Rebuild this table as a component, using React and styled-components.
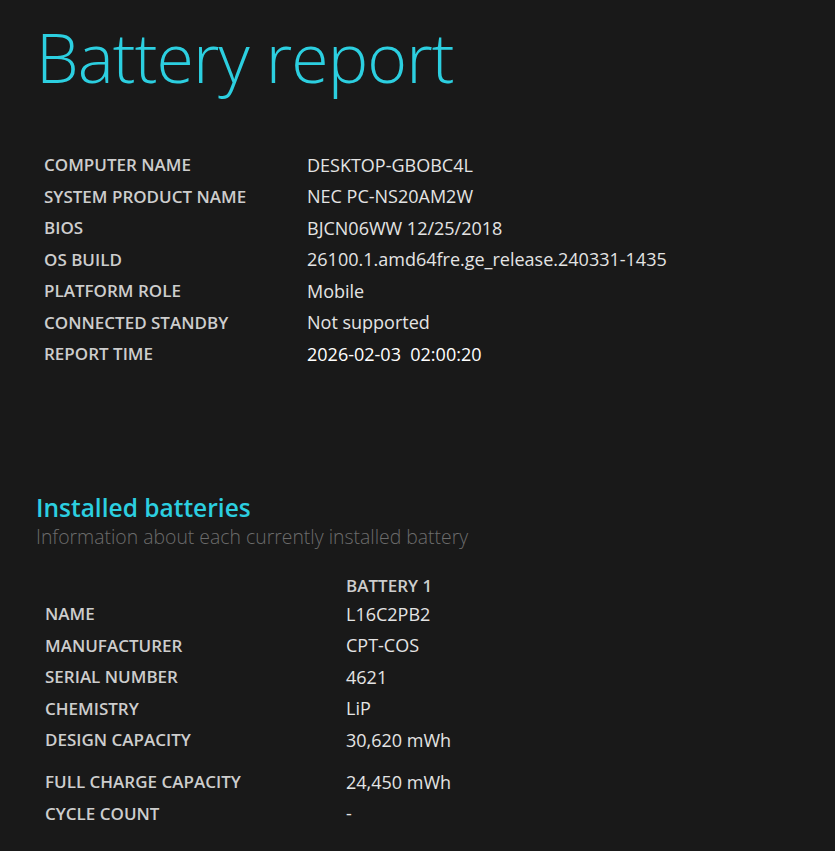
import React from "react";
import styled, { createGlobalStyle } from "styled-components";

const GlobalStyle = createGlobalStyle`
  html, body {
    margin: 0;
    background: #191919;
  }
  body {
    font-family: "Open Sans", "Noto Sans", sans-serif;
    color: #e6e6e6;
  }
`;

const systemInfo = [
  ["COMPUTER NAME", "DESKTOP-GBOBC4L"],
  ["SYSTEM PRODUCT NAME", "NEC PC-NS20AM2W"],
  ["BIOS", "BJCN06WW 12/25/2018"],
  ["OS BUILD", "26100.1.amd64fre.ge_release.240331-1435"],
  ["PLATFORM ROLE", "Mobile"],
  ["CONNECTED STANDBY", "Not supported"],
  ["REPORT TIME", "2026-02-03\u00a0\u00a002:00:20", true],
];

const battery = [
  ["NAME", "L16C2PB2"],
  ["MANUFACTURER", "CPT-COS"],
  ["SERIAL NUMBER", "4621"],
  ["CHEMISTRY", "LiP"],
  ["DESIGN CAPACITY", "30,620 mWh"],
  ["FULL CHARGE CAPACITY", "24,450 mWh", true],
  ["CYCLE COUNT", "-"],
];

function App() {
  return (
    <Page>
      <GlobalStyle />
      <Title>Battery report</Title>

      <Table $indent={8}>
        {systemInfo.map(([label, value, bright]) => (
          <Row key={label} $labelWidth={263}>
            <Label>{label}</Label>
            <Value $bright={bright}>{value}</Value>
          </Row>
        ))}
      </Table>

      <Section>
        <SectionTitle>Installed batteries</SectionTitle>
        <SectionNote>Information about each currently installed battery</SectionNote>

        <Table $indent={9}>
          <HeadRow $labelWidth={301}>
            <span />
            <Label>BATTERY 1</Label>
          </HeadRow>
          {battery.map(([label, value, spaced]) => (
            <Row key={label} $labelWidth={301} $spaced={spaced}>
              <Label>{label}</Label>
              <Value>{value}</Value>
            </Row>
          ))}
        </Table>
      </Section>
    </Page>
  );
}

export default App;

const Page = styled.div`
  padding: 17px 0 0 36px;
  min-height: 834px;
`;

const Title = styled.h1`
  margin: 0 0 52px 0;
  font-size: 68px;
  font-weight: 300;
  line-height: 80px;
  color: #2ccfe0;
  letter-spacing: -0.9px;
`;

const Table = styled.div`
  display: flex;
  flex-direction: column;
  padding-left: ${(p) => p.$indent}px;
`;

const Row = styled.div`
  display: grid;
  grid-template-columns: ${(p) => p.$labelWidth}px auto;
  align-items: center;
  height: 31.5px;
  margin-top: ${(p) => (p.$spaced ? "10.5px" : "0")};
`;

const HeadRow = styled(Row)`
  height: 25.5px;
`;

const Label = styled.div`
  font-size: 17px;
  font-weight: 600;
  color: #cdcdcd;
  white-space: nowrap;
`;

const Value = styled.div`
  font-size: 18px;
  font-weight: 400;
  color: ${(p) => (p.$bright ? "#ffffff" : "#e4e4e4")};
  white-space: nowrap;
`;

const Section = styled.section`
  margin-top: 123px;
`;

const SectionTitle = styled.h2`
  margin: 0;
  font-size: 24.5px;
  font-weight: 600;
  line-height: 30px;
  color: #2ccfe0;
`;

const SectionNote = styled.p`
  margin: 0 0 22px 0;
  font-size: 19.4px;
  font-weight: 300;
  line-height: 28px;
  color: #6c6c6c;
`;
